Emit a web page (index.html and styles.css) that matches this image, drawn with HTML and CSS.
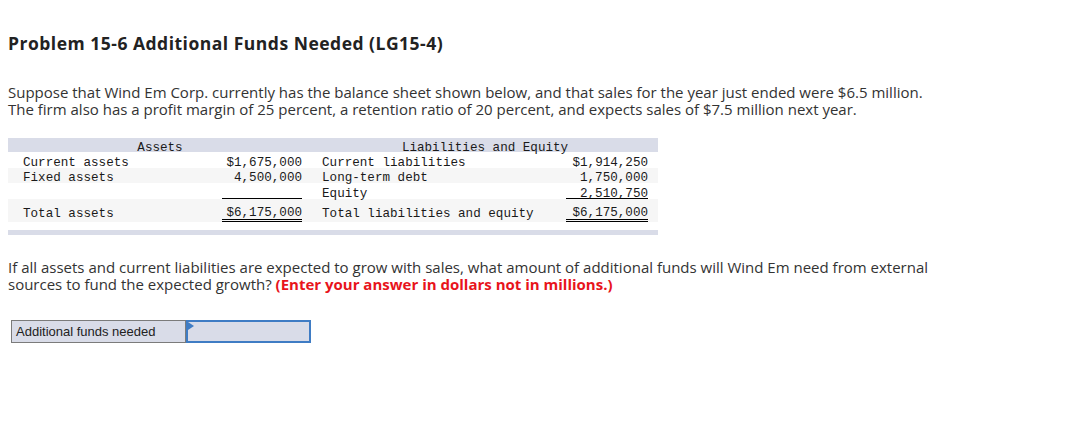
FILE: index.html
```html
<!DOCTYPE html>
<html>
<head>
<meta charset="utf-8">
<link rel="stylesheet" href="styles.css">
</head>
<body>
<h1 class="title">Problem 15-6 Additional Funds Needed (LG15-4)</h1>
<p class="para intro">Suppose that Wind Em Corp. currently has the balance sheet shown below, and that sales for the year just ended were $6.5 million. The firm also has a profit margin of 25 percent, a retention ratio of 20 percent, and expects sales of $7.5 million next year.</p>
<div class="sheet">
  <table class="bs">
    <colgroup><col class="c1"><col class="c2"><col class="c3"><col class="c4"></colgroup>
    <tr class="head"><th colspan="2">Assets</th><th colspan="2">Liabilities and Equity</th></tr>
    <tr class="r1"><td class="lbl">Current assets</td><td class="amt"><span>$1,675,000</span></td><td class="lbl2">Current liabilities</td><td class="amt"><span>$1,914,250</span></td></tr>
    <tr class="r2"><td class="lbl">Fixed assets</td><td class="amt"><span>4,500,000</span></td><td class="lbl2">Long-term debt</td><td class="amt"><span>1,750,000</span></td></tr>
    <tr class="r3"><td class="lbl"></td><td class="amt"><span class="single">&nbsp;</span></td><td class="lbl2">Equity</td><td class="amt"><span class="single">2,510,750</span></td></tr>
    <tr class="tot"><td class="lbl">Total assets</td><td class="amt"><span class="double">$6,175,000</span></td><td class="lbl2">Total liabilities and equity</td><td class="amt"><span class="double">$6,175,000</span></td></tr>
  </table>
  <div class="foot"></div>
</div>
<p class="para q">If all assets and current liabilities are expected to grow with sales, what amount of additional funds will Wind Em need from external sources to fund the expected growth? <strong class="note">(Enter your answer in dollars not in millions.)</strong></p>
<div class="answer">
  <div class="alabel">Additional funds needed</div>
  <div class="ainput"><span class="flag"></span></div>
</div>
</body>
</html>
```
FILE: styles.css
```css
html, body { margin: 0; padding: 0; background: #fff; }
body { padding: 0 8px; font-family: "Open Sans", "Lato", sans-serif; color: #333; }
.title { margin: 0; padding-top: 32px; font-size: 17.5px; line-height: 22px; font-weight: 700; color: #222; letter-spacing: 0.5px; }
.para { margin: 0; font-size: 15px; line-height: 17px; width: 940px; letter-spacing: 0; }
.intro { margin-top: 30px; }
.sheet { margin-top: 20px; width: 650px; }
.bs { border-collapse: collapse; table-layout: fixed; width: 650px; font-family: "Liberation Mono", "Courier New", monospace; font-size: 12.6px; color: #1a1a1a; }
.c1 { width: 204px; } .c2 { width: 100px; } .c3 { width: 244px; } .c4 { width: 102px; }
.bs th, .bs td { padding: 0; font-weight: 400; white-space: pre; vertical-align: top; }
.head th { background: #d9dce8; height: 7px; padding-top: 7px; line-height: 7px; text-align: center; }
.r1 td { height: 9px; padding-top: 7px; line-height: 9px; background: #fff; }
.r2 td { height: 9px; padding-top: 6px; line-height: 9px; background: #f6f6f6; }
.r3 td { height: 9px; padding-top: 7px; line-height: 9px; background: #fff; }
.r3 td.amt { height: 16px; padding-top: 0; }
.r3 .single { border-bottom: 1px solid #000; padding-top: 7px; line-height: 8px; height: 8px; }
.tot td { height: 23px; background: #f6f6f6; }
.lbl { padding-left: 15px !important; }
.lbl2 { padding-left: 10px !important; }
.amt { padding-left: 10px !important; padding-right: 10px !important; text-align: right; }
.amt span { display: block; }
.tot .amt span { line-height: 12px; height: 12px; padding-top: 8px; border-bottom: 3px double #000; }
.tot .lbl, .tot .lbl2 { line-height: 11px; padding-top: 10px; height: 13px; }
.foot { margin-top: 8px; height: 5px; background: #d9dce8; }
.q { margin-top: 24px; }
.note { color: #e8141b; font-weight: 700; }
.answer { display: flex; margin-top: 27px; margin-left: 3px; height: 23px; }
.alabel { width: 169px; padding-left: 4px; border: 1px solid #7b7b7b; background: #d9dce8; font-size: 13px; line-height: 21px; color: #222; font-family: "Liberation Sans", Arial, sans-serif; }
.ainput { position: relative; width: 121px; border: 2px solid #3f7cc4; background: #d9dce8; height: 19px; }
.flag { position: absolute; left: 0; top: 0; width: 0; height: 0; border-top: 4px solid transparent; border-bottom: 4px solid transparent; border-left: 6px solid #3f7cc4; }
```
